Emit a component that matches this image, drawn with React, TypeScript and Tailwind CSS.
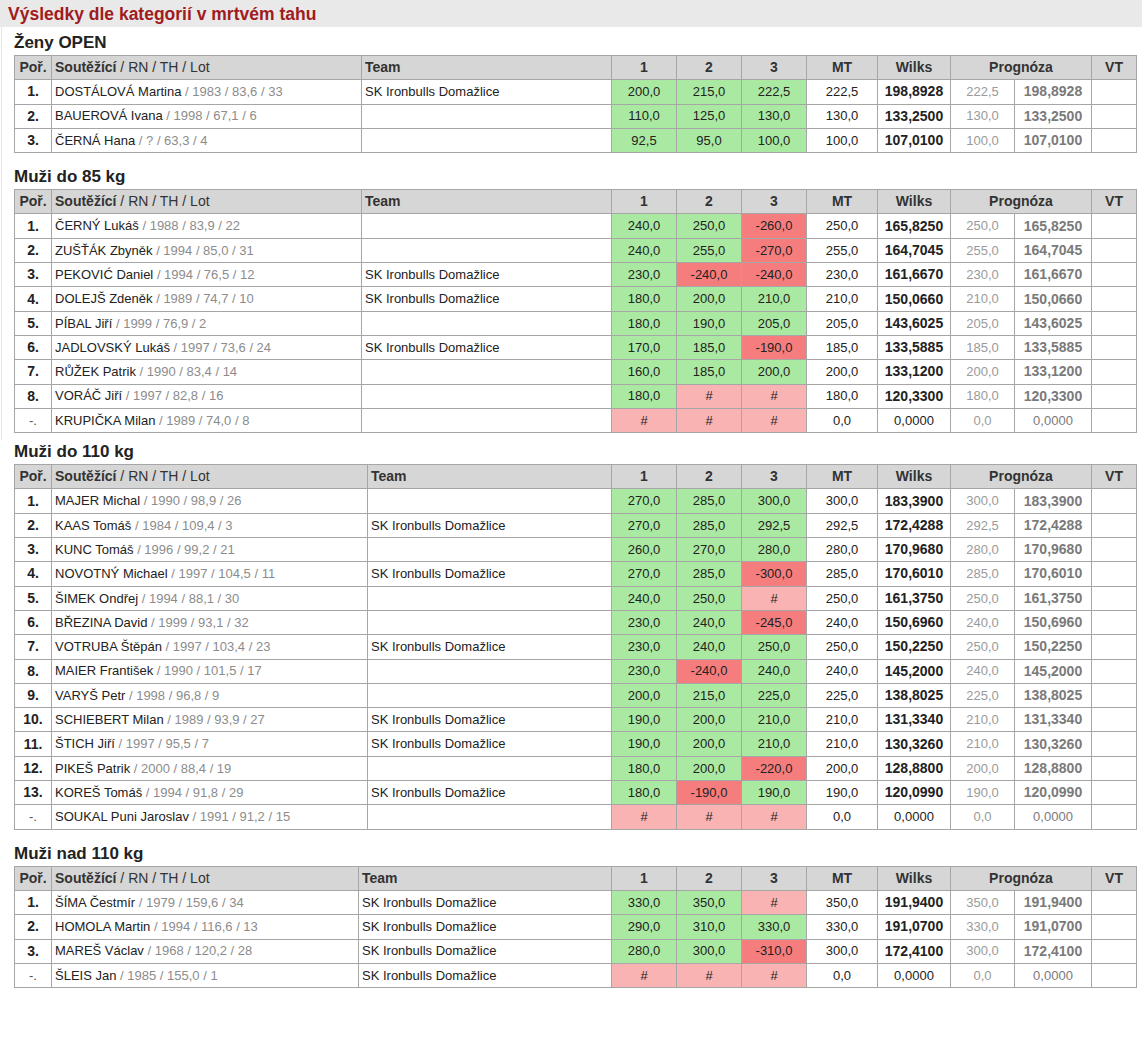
import React from "react";

type Row = {
  r: string;
  name: string;
  info: string;
  team: string;
  a: [string, string, string];
  mt: string;
  w: string;
};

const SK = "SK Ironbulls Domažlice";

const sections: { title: string; cols: [number, number]; rows: Row[]; pt: string }[] = [
  {
    title: "Ženy OPEN",
    cols: [310, 250],
    pt: "pt-[4px]",
    rows: [
      { r: "1.", name: "DOSTÁLOVÁ Martina", info: " / 1983 / 83,6 / 33", team: SK, a: ["200,0", "215,0", "222,5"], mt: "222,5", w: "198,8928" },
      { r: "2.", name: "BAUEROVÁ Ivana", info: " / 1998 / 67,1 / 6", team: "", a: ["110,0", "125,0", "130,0"], mt: "130,0", w: "133,2500" },
      { r: "3.", name: "ČERNÁ Hana", info: " / ? / 63,3 / 4", team: "", a: ["92,5", "95,0", "100,0"], mt: "100,0", w: "107,0100" },
    ],
  },
  {
    title: "Muži do 85 kg",
    cols: [310, 250],
    pt: "pt-[12px]",
    rows: [
      { r: "1.", name: "ČERNÝ Lukáš", info: " / 1988 / 83,9 / 22", team: "", a: ["240,0", "250,0", "-260,0"], mt: "250,0", w: "165,8250" },
      { r: "2.", name: "ZUŠŤÁK Zbyněk", info: " / 1994 / 85,0 / 31", team: "", a: ["240,0", "255,0", "-270,0"], mt: "255,0", w: "164,7045" },
      { r: "3.", name: "PEKOVIĆ Daniel", info: " / 1994 / 76,5 / 12", team: SK, a: ["230,0", "-240,0", "-240,0"], mt: "230,0", w: "161,6670" },
      { r: "4.", name: "DOLEJŠ Zdeněk", info: " / 1989 / 74,7 / 10", team: SK, a: ["180,0", "200,0", "210,0"], mt: "210,0", w: "150,0660" },
      { r: "5.", name: "PÍBAL Jiří", info: " / 1999 / 76,9 / 2", team: "", a: ["180,0", "190,0", "205,0"], mt: "205,0", w: "143,6025" },
      { r: "6.", name: "JADLOVSKÝ Lukáš", info: " / 1997 / 73,6 / 24", team: SK, a: ["170,0", "185,0", "-190,0"], mt: "185,0", w: "133,5885" },
      { r: "7.", name: "RŮŽEK Patrik", info: " / 1990 / 83,4 / 14", team: "", a: ["160,0", "185,0", "200,0"], mt: "200,0", w: "133,1200" },
      { r: "8.", name: "VORÁČ Jiří", info: " / 1997 / 82,8 / 16", team: "", a: ["180,0", "#", "#"], mt: "180,0", w: "120,3300" },
      { r: "-.", name: "KRUPIČKA Milan", info: " / 1989 / 74,0 / 8", team: "", a: ["#", "#", "#"], mt: "0,0", w: "0,0000" },
    ],
  },
  {
    title: "Muži do 110 kg",
    cols: [316, 244],
    pt: "pt-0",
    rows: [
      { r: "1.", name: "MAJER Michal", info: " / 1990 / 98,9 / 26", team: "", a: ["270,0", "285,0", "300,0"], mt: "300,0", w: "183,3900" },
      { r: "2.", name: "KAAS Tomáš", info: " / 1984 / 109,4 / 3", team: SK, a: ["270,0", "285,0", "292,5"], mt: "292,5", w: "172,4288" },
      { r: "3.", name: "KUNC Tomáš", info: " / 1996 / 99,2 / 21", team: "", a: ["260,0", "270,0", "280,0"], mt: "280,0", w: "170,9680" },
      { r: "4.", name: "NOVOTNÝ Michael", info: " / 1997 / 104,5 / 11", team: SK, a: ["270,0", "285,0", "-300,0"], mt: "285,0", w: "170,6010" },
      { r: "5.", name: "ŠIMEK Ondřej", info: " / 1994 / 88,1 / 30", team: "", a: ["240,0", "250,0", "#"], mt: "250,0", w: "161,3750" },
      { r: "6.", name: "BŘEZINA David", info: " / 1999 / 93,1 / 32", team: "", a: ["230,0", "240,0", "-245,0"], mt: "240,0", w: "150,6960" },
      { r: "7.", name: "VOTRUBA Štěpán", info: " / 1997 / 103,4 / 23", team: SK, a: ["230,0", "240,0", "250,0"], mt: "250,0", w: "150,2250" },
      { r: "8.", name: "MAIER František", info: " / 1990 / 101,5 / 17", team: "", a: ["230,0", "-240,0", "240,0"], mt: "240,0", w: "145,2000" },
      { r: "9.", name: "VARYŠ Petr", info: " / 1998 / 96,8 / 9", team: "", a: ["200,0", "215,0", "225,0"], mt: "225,0", w: "138,8025" },
      { r: "10.", name: "SCHIEBERT Milan", info: " / 1989 / 93,9 / 27", team: SK, a: ["190,0", "200,0", "210,0"], mt: "210,0", w: "131,3340" },
      { r: "11.", name: "ŠTICH Jiří", info: " / 1997 / 95,5 / 7", team: SK, a: ["190,0", "200,0", "210,0"], mt: "210,0", w: "130,3260" },
      { r: "12.", name: "PIKEŠ Patrik", info: " / 2000 / 88,4 / 19", team: "", a: ["180,0", "200,0", "-220,0"], mt: "200,0", w: "128,8800" },
      { r: "13.", name: "KOREŠ Tomáš", info: " / 1994 / 91,8 / 29", team: SK, a: ["180,0", "-190,0", "190,0"], mt: "190,0", w: "120,0990" },
      { r: "-.", name: "SOUKAL Puni Jaroslav", info: " / 1991 / 91,2 / 15", team: "", a: ["#", "#", "#"], mt: "0,0", w: "0,0000" },
    ],
  },
  {
    title: "Muži nad 110 kg",
    cols: [307, 253],
    pt: "pt-[12px]",
    rows: [
      { r: "1.", name: "ŠÍMA Čestmír", info: " / 1979 / 159,6 / 34", team: SK, a: ["330,0", "350,0", "#"], mt: "350,0", w: "191,9400" },
      { r: "2.", name: "HOMOLA Martin", info: " / 1994 / 116,6 / 13", team: SK, a: ["290,0", "310,0", "330,0"], mt: "330,0", w: "191,0700" },
      { r: "3.", name: "MAREŠ Václav", info: " / 1968 / 120,2 / 28", team: SK, a: ["280,0", "300,0", "-310,0"], mt: "300,0", w: "172,4100" },
      { r: "-.", name: "ŠLEIS Jan", info: " / 1985 / 155,0 / 1", team: SK, a: ["#", "#", "#"], mt: "0,0", w: "0,0000" },
    ],
  },
];

const td = "border border-[#a6a6a6] px-[3px] py-0";
const th = "border border-[#a6a6a6] px-[3px] py-0 font-bold text-[14px] text-[#333]";

function attemptClass(v: string) {
  if (v === "#") return "bg-[#f9b3b3]";
  if (v.startsWith("-")) return "bg-[#f67d7d]";
  return "bg-[#aae9a1]";
}

function Table({ cols, rows, ml }: { cols: [number, number]; rows: Row[]; ml: string }) {
  return (
    <table className={`table-fixed border-collapse w-[1123px] ${ml} text-[13px] text-[#222]`}>
      <colgroup>
        <col className="w-[37px]" />
        <col style={{ width: cols[0] }} />
        <col style={{ width: cols[1] }} />
        <col className="w-[65px]" />
        <col className="w-[65px]" />
        <col className="w-[65px]" />
        <col className="w-[71px]" />
        <col className="w-[73px]" />
        <col className="w-[64px]" />
        <col className="w-[77px]" />
        <col className="w-[45px]" />
      </colgroup>
      <thead>
        <tr className="h-[24.3px] bg-[#d6d6d6]">
          <th className={`${th} text-center`}>Poř.</th>
          <th className={`${th} text-left`}>
            Soutěžící<span className="font-normal"> / RN / TH / Lot</span>
          </th>
          <th className={`${th} text-left`}>Team</th>
          <th className={`${th} text-center`}>1</th>
          <th className={`${th} text-center`}>2</th>
          <th className={`${th} text-center`}>3</th>
          <th className={`${th} text-center`}>MT</th>
          <th className={`${th} text-center`}>Wilks</th>
          <th className={`${th} text-center`} colSpan={2}>
            Prognóza
          </th>
          <th className={`${th} text-center`}>VT</th>
        </tr>
      </thead>
      <tbody>
        {rows.map((row, i) => {
          const dq = row.w === "0,0000";
          return (
            <tr key={i} className="h-[24.3px] bg-white">
              <td className={`${td} text-center ${row.r === "-." ? "text-[#555]" : "font-bold text-[14px]"}`}>{row.r}</td>
              <td className={`${td} whitespace-nowrap overflow-hidden`}>
                {row.name}
                <span className="text-[#8c8c8c]">{row.info}</span>
              </td>
              <td className={`${td} whitespace-nowrap`}>{row.team}</td>
              {row.a.map((v, j) => (
                <td key={j} className={`${td} text-center ${attemptClass(v)}`}>
                  {v}
                </td>
              ))}
              <td className={`${td} text-center`}>{row.mt}</td>
              <td className={`${td} text-center ${dq ? "" : "font-bold text-[14px]"}`}>{row.w}</td>
              <td className={`${td} text-center text-[#9a9a9a]`}>{row.mt}</td>
              <td className={`${td} text-center text-[#7a7a7a] ${dq ? "" : "font-bold text-[14px]"}`}>{row.w}</td>
              <td className={td}></td>
            </tr>
          );
        })}
      </tbody>
    </table>
  );
}

function Heading({ title, pt, pl }: { title: string; pt: string; pl: string }) {
  return (
    <div className={`${pt} ${pl}`}>
      <div className="h-[24px] leading-[24px] text-[17px] font-bold text-[#222]">{title}</div>
    </div>
  );
}

export default function App() {
  return (
    <div className="w-[1145px] min-h-[1050px] bg-white font-['Liberation_Sans',Arial,sans-serif]">
      <div className="w-[1142px] h-[27px] bg-[#e9e9e9] flex items-center pl-[8px]">
        <span className="text-[17.5px] font-bold text-[#a01b20] leading-[20px]">Výsledky dle kategorií v mrtvém tahu</span>
      </div>
      <div className="ml-[1px] border-l border-[#e4e4e4]">
        <Heading title={sections[0].title} pt={sections[0].pt} pl="pl-[12px]" />
        <Table cols={sections[0].cols} rows={sections[0].rows} ml="ml-[12px]" />
        <Heading title={sections[1].title} pt={sections[1].pt} pl="pl-[12px]" />
        <Table cols={sections[1].cols} rows={sections[1].rows} ml="ml-[12px]" />
        <div className="h-[7px]" />
      </div>
      <div>
        <Heading title={sections[2].title} pt={sections[2].pt} pl="pl-[14px]" />
        <Table cols={sections[2].cols} rows={sections[2].rows} ml="ml-[14px]" />
        <Heading title={sections[3].title} pt={sections[3].pt} pl="pl-[14px]" />
        <Table cols={sections[3].cols} rows={sections[3].rows} ml="ml-[14px]" />
      </div>
    </div>
  );
}
